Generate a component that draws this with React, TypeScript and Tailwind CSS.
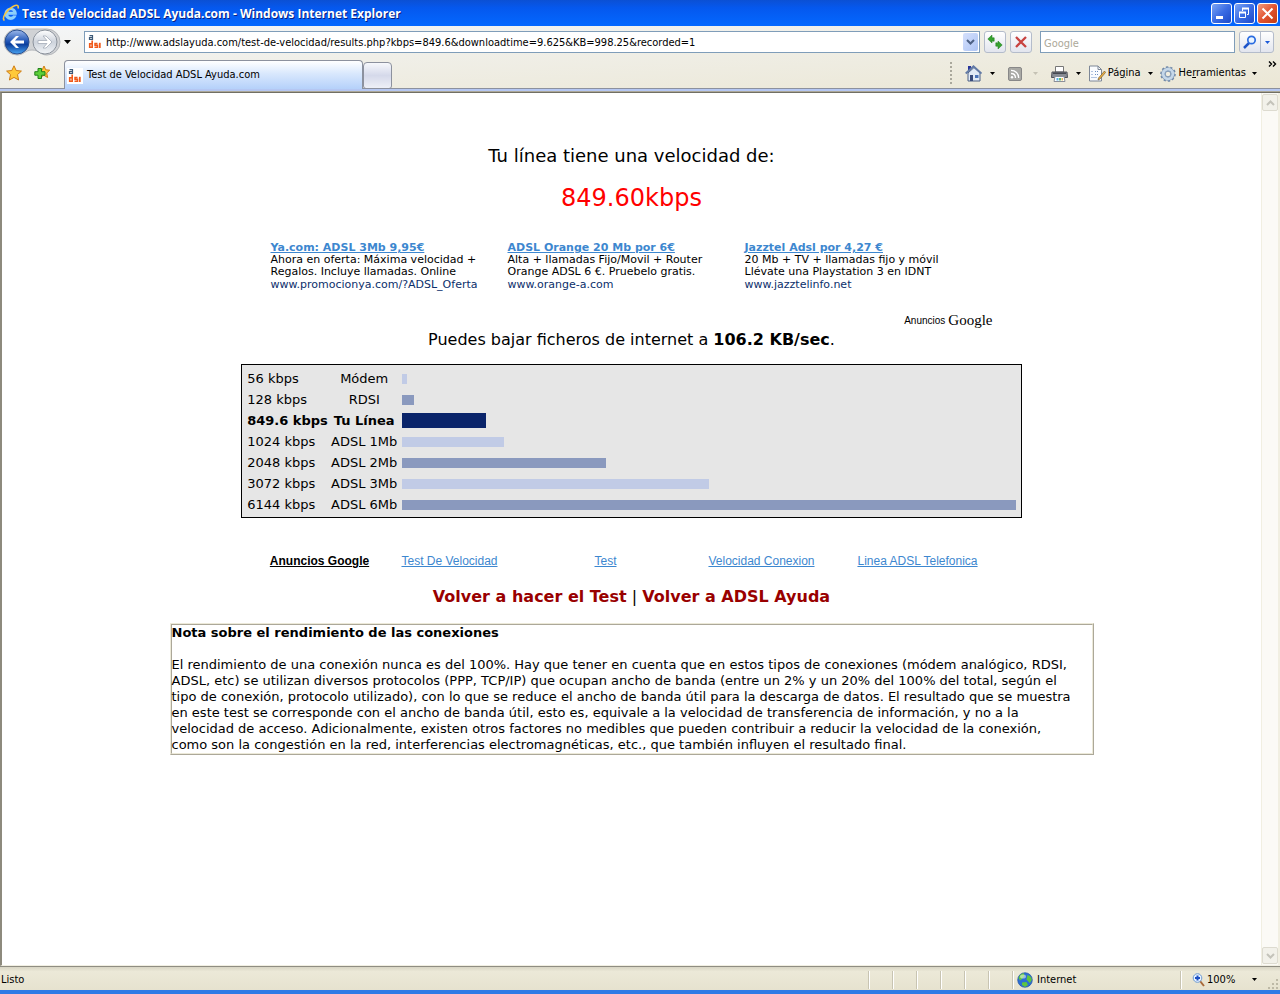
import type { ReactNode } from "react";

const tahoma = "font-['DejaVu_Sans_Condensed','DejaVu_Sans',sans-serif] text-[11px]";

const ads = [
  {
    title: "Ya.com: ADSL 3Mb 9,95€",
    lines: ["Ahora en oferta: Máxima velocidad +", "Regalos. Incluye llamadas. Online"],
    url: "www.promocionya.com/?ADSL_Oferta",
  },
  {
    title: "ADSL Orange 20 Mb por 6€",
    lines: ["Alta + llamadas Fijo/Movil + Router", "Orange ADSL 6 €. Pruebelo gratis."],
    url: "www.orange-a.com",
  },
  {
    title: "Jazztel Adsl por 4,27 €",
    lines: ["20 Mb + TV + llamadas fijo y móvil", "Llévate una Playstation 3 en IDNT"],
    url: "www.jazztelinfo.net",
  },
];

const speeds = [
  { kbps: 56, name: "Módem", bar: "h-[10px] bg-[#c1cbe6]" },
  { kbps: 128, name: "RDSI", bar: "h-[10px] bg-[#8a99be]" },
  { kbps: 849.6, name: "Tu Línea", bar: "h-[15px] bg-[#0a246a]", own: true },
  { kbps: 1024, name: "ADSL 1Mb", bar: "h-[10px] bg-[#c1cbe6]" },
  { kbps: 2048, name: "ADSL 2Mb", bar: "h-[10px] bg-[#8a99be]" },
  { kbps: 3072, name: "ADSL 3Mb", bar: "h-[10px] bg-[#c1cbe6]" },
  { kbps: 6144, name: "ADSL 6Mb", bar: "h-[10px] bg-[#8a99be]" },
];

const topics = ["Test De Velocidad", "Test", "Velocidad Conexion", "Linea ADSL Telefonica"];

function Caret({ color = "#000" }: { color?: string }) {
  return (
    <svg width="5" height="3" viewBox="0 0 5 3" className="shrink-0">
      <path d="M0 0h5L2.5 3z" fill={color} />
    </svg>
  );
}

function IeLogo() {
  return (
    <svg width="18" height="18" viewBox="0 0 18 18" className="shrink-0">
      <path d="M14.500 10.500H6c.3 2.800 3.800 3.100 5 1.200h3.200C12 17.800 2.800 16.600 2.800 9.800 2.800 2.200 15.200 1.600 14.500 10.500zM6 8h5.300c-.4-2.600-4.700-2.600-5.300 0z" fill="#8ad0fb" stroke="#bfe6ff" strokeWidth=".4" />
      <path d="M2.500 16.500C-.5 14.500 4 6 11 2.500c4-2 6-1.500 5 2" fill="none" stroke="#f5c542" strokeWidth="1.600" />
    </svg>
  );
}

function Favicon() {
  return (
    <svg width="16" height="16" viewBox="0 0 16 16" className="shrink-0">
      <rect width="16" height="16" fill="#fff" />
      <path d="M2.500 1.600h3V5.400h-3V3.500h3" fill="none" stroke="#3d5a78" strokeWidth="1.200" />
      <path d="M5.200 6.500v6.700H2.700V9.700h2.500" fill="none" stroke="#f0591a" strokeWidth="1.600" />
      <path d="M10.500 9.500H8v1.800h2.500v2H7.500" fill="none" stroke="#f0591a" strokeWidth="1.500" />
      <path d="M12.800 8.800V14" stroke="#f0591a" strokeWidth="1.800" />
    </svg>
  );
}

function NavButtons() {
  return (
    <svg width="58" height="28" viewBox="0 0 58 28">
      <defs>
        <linearGradient id="back" x1="0" y1="0" x2="0" y2="1">
          <stop offset="0" stopColor="#9db9ea" />
          <stop offset=".45" stopColor="#2559b8" />
          <stop offset=".6" stopColor="#0c3f9e" />
          <stop offset="1" stopColor="#48a4f2" />
        </linearGradient>
        <linearGradient id="fwd" x1="0" y1="0" x2="0" y2="1">
          <stop offset="0" stopColor="#fff" />
          <stop offset=".5" stopColor="#cdd3dc" />
          <stop offset="1" stopColor="#f2f5f8" />
        </linearGradient>
      </defs>
      <path d="M14 1h30a13 13 0 0 1 0 26c-7 0-8-5-15-5s-8 5-15 5A13 13 0 0 1 14 1z" fill="#d0d2d5" stroke="#b4b7bb" />
      <circle cx="14" cy="14" r="12" fill="url(#back)" stroke="#2b4f8f" />
      <circle cx="42" cy="14" r="12" fill="url(#fwd)" stroke="#8b929c" />
      <path d="M7 14l6-6h3l-4 4.500h9v3h-9l4 4.500h-3z" fill="#fff" />
      <path d="M49 14l-6-6h-3l4 4.500h-9v3h9l-4 4.500h3z" fill="#fff" stroke="#a3abb7" strokeWidth=".8" />
    </svg>
  );
}

function Star({ plus = false }: { plus?: boolean }) {
  return (
    <svg width="16" height="16" viewBox="0 0 16 16">
      <path d={plus ? "M10 1l1.700 3.800 4 .4-3 2.800.9 4.500L10 10.300 6 12.500 7 8 4.500 5.200l3.700-.4z" : "M8 .8l2.200 4.700 5.200.6-3.900 3.500 1.100 5.400L8 12.400 3.400 15l1.100-5.400L.6 6.100l5.200-.6z"} fill="#ffc93a" stroke="#cf7c13" />
      {plus && <path d="M4 3.500h3.500v3.200H11v3.500H7.500v3.300H4v-3.300H.8V6.700H4z" fill="#5ed039" stroke="#21801b" />}
    </svg>
  );
}

function HomeIcon() {
  return (
    <svg width="17" height="17" viewBox="0 0 17 17">
      <path d="M3 1h3v4H3z" fill="#27349b" />
      <path d="M3 8l6-5.500L15 8v8H3z" fill="#e1eaf6" stroke="#4c6085" />
      <path d="M.7 8.500L8.500 1.300l8 7.200" fill="none" stroke="#627aa6" strokeWidth="1.800" />
      <path d="M5 10h3v6H5z" fill="#394b7a" />
      <path d="M10 10h3.500v3H10z" fill="#4b74b8" />
    </svg>
  );
}

function RssIcon() {
  return (
    <svg width="14" height="14" viewBox="0 0 14 14">
      <rect x=".5" y=".5" width="13" height="13" rx="1.500" fill="#a9a9a5" stroke="#888" />
      <circle cx="4" cy="10.300" r="1.200" fill="#fff" />
      <path d="M3 6.500c2.700 0 4.500 1.800 4.500 4.500M3 3.300c4.500 0 7.700 3.200 7.700 7.700" fill="none" stroke="#fff" strokeWidth="1.300" />
    </svg>
  );
}

function PrinterIcon() {
  return (
    <svg width="17" height="16" viewBox="0 0 17 16">
      <path d="M4.500.5h8V6h-8z" fill="#fff" stroke="#777" />
      <path d="M1 6h15l.5 5.500H.5z" fill="#888c93" stroke="#50545b" />
      <path d="M2 6.500h13v1.500H2z" fill="#454950" />
      <path d="M4 10.500h9l1 5H3z" fill="#fff" stroke="#8b9099" />
      <path d="M5.500 12h2v2.500h-2z" fill="#58aee8" />
      <path d="M8 12h2v2.500H8z" fill="#61bd71" />
      <path d="M10.500 12h1.500v2.500h-1.500z" fill="#e8b658" />
    </svg>
  );
}

function PageIcon() {
  return (
    <svg width="17" height="17" viewBox="0 0 17 17">
      <path d="M.5 1h8.500l3.500 3.500V16H.5z" fill="#fafcff" stroke="#7d8797" />
      <path d="M9 1v3.500h3.500" fill="none" stroke="#7d8797" />
      <path d="M2.500 6.500h2M6 6.500h4M2.500 9.500h2M6 9.500h3M2.500 12.500h5" stroke="#6d8fc2" strokeDasharray="1 1" />
      <path d="M15.500 6L9.500 13l-.5 2 2-1 5.500-6.500z" fill="#eeb044" stroke="#765d31" strokeWidth=".7" />
    </svg>
  );
}

function GearIcon() {
  return (
    <svg width="16" height="16" viewBox="0 0 16 16">
      <circle cx="8" cy="8" r="6.700" fill="none" stroke="#6f87a6" strokeWidth="2.200" strokeDasharray="2.200 2" />
      <circle cx="8" cy="8" r="4.800" fill="none" stroke="#7d96b5" strokeWidth="4" />
      <circle cx="8" cy="8" r="4.800" fill="none" stroke="#c5d7e9" strokeWidth="2.800" />
      <circle cx="8" cy="8" r="2.800" fill="#f0ede0" stroke="#7d96b5" />
    </svg>
  );
}

function GlobeIcon() {
  return (
    <svg width="16" height="16" viewBox="0 0 16 16" className="shrink-0">
      <circle cx="8" cy="8" r="7.300" fill="#2b6ed6" stroke="#2454a0" strokeWidth=".7" />
      <path d="M1.500 6c1-3 3-4.700 5.500-4.700L7.500 4 5 7 3 8.500zM10.500 3c2.500.5 4.300 2.500 4.300 5l-2 3-3.300-3.500zM5 10.500l4.500-.5 1.500 3L8 15l-3-2z" fill="#5fc540" />
      <ellipse cx="6" cy="4.500" rx="3" ry="2" fill="#fff" opacity=".5" />
    </svg>
  );
}

function Magnifier() {
  return (
    <svg width="13" height="14" viewBox="0 0 13 14" className="shrink-0">
      <path d="M8 8l4 5" stroke="#a8693a" strokeWidth="2" />
      <circle cx="5.500" cy="5" r="4.300" fill="#e7f2ff" stroke="#6e9bd2" />
      <path d="M5.500 2.500v5M3 5h5" stroke="#1d50c4" strokeWidth="2" />
    </svg>
  );
}

function TitleButton({ label, close = false, children }: { label: string; close?: boolean; children: ReactNode }) {
  return (
    <button
      aria-label={label}
      className={`flex size-[21px] items-center justify-center rounded-[3px] border border-white ${
        close ? "bg-linear-to-br from-[#f0997c] via-[#e25330] to-[#c33c12]" : "bg-linear-to-br from-[#7da4f4] via-[#3a6ce4] to-[#1d49c8]"
      }`}
    >
      <svg width="19" height="19" viewBox="0 0 19 19" fill="none" stroke="#fff" strokeWidth="2">
        {children}
      </svg>
    </button>
  );
}

function TitleBar() {
  return (
    <header className="flex h-[26px] items-center gap-[2px] bg-linear-to-b from-[#0b50d4] via-[#0558ee] via-30% to-[#0468ff] pr-[2px] pl-[2px]">
      <IeLogo />
      <h1 className="flex-1 pt-px font-['Open_Sans','Noto_Sans',sans-serif] text-[12px] font-bold text-white [text-shadow:1px_1px_#0a1f80]">
        Test de Velocidad ADSL Ayuda.com - Windows Internet Explorer
      </h1>
      <div className="flex gap-[2px]">
        <TitleButton label="Minimizar">
          <path d="M4 13.500h7" strokeWidth="3" />
        </TitleButton>
        <TitleButton label="Restaurar">
          <path d="M7.500 7V4.500h6v6H12M4.500 8.500h6v5h-6z" strokeWidth="1" />
          <path d="M7 4.500h7M4 8.500h7" strokeWidth="2" />
        </TitleButton>
        <TitleButton label="Cerrar" close>
          <path d="M4.500 4.500l10 10M14.500 4.500l-10 10" />
        </TitleButton>
      </div>
    </header>
  );
}

const squareButton = "flex h-[22px] w-[22px] items-center justify-center rounded-[3px] border border-[#b4bccb] bg-linear-to-b from-white to-[#e2e5ee]";

function AddressRow() {
  return (
    <div className="flex h-8 items-center pr-[6px] pl-[3px]">
      <div className="flex w-[81px] items-center gap-[3px]">
        <button aria-label="Atrás y adelante">
          <NavButtons />
        </button>
        <button aria-label="Páginas recientes" className="py-2">
          <svg width="7" height="4" viewBox="0 0 7 4"><path d="M0 0h7L3.500 4z" /></svg>
        </button>
      </div>
      <div className="flex h-[22px] flex-1 items-center border border-[#7f9db9] bg-white pr-px pl-[2px]">
        <Favicon />
        <input
          aria-label="Dirección"
          className="ml-[3px] min-w-0 flex-1 pt-[2px] outline-none"
          defaultValue="http://www.adslayuda.com/test-de-velocidad/results.php?kbps=849.6&downloadtime=9.625&KB=998.25&recorded=1"
        />
        <button aria-label="Mostrar direcciones" className="flex h-[18px] w-[15px] items-center justify-center rounded-[2px] bg-linear-to-br from-[#d5e0fc] to-[#adc4f4]">
          <svg width="9" height="6" viewBox="0 0 9 6"><path d="M1 1l3.500 3.500L8 1" fill="none" stroke="#4d6185" strokeWidth="2" /></svg>
        </button>
      </div>
      <div className="ml-1 flex gap-1">
        <button aria-label="Actualizar" className={squareButton}>
          <svg width="16" height="14" viewBox="0 0 16 14" className="shrink-0">
            <path d="M.8 4L5 0v2.800h2.200v3.400H5.500V5.200H5v2.800zM15.200 10L11 14v-2.800H8.800V7.800h1.700v1h.5V6z" fill="#36a32f" stroke="#1c7a1b" strokeWidth=".5" />
          </svg>
        </button>
        <button aria-label="Detener" className={squareButton}>
          <svg width="14" height="14" viewBox="0 0 14 14">
            <path d="M2 2l10 10M12 2L2 12" stroke="#c84340" strokeWidth="2.300" />
          </svg>
        </button>
      </div>
      <input aria-label="Buscar" placeholder="Google" className="ml-2 h-[22px] w-[195px] border border-[#7f9db9] bg-white px-[3px] pt-[2px] outline-none placeholder:text-[#aca899]" />
      <div className="ml-1 flex h-[22px] rounded-[3px] border border-[#b4bccb] bg-linear-to-b from-white to-[#e2e5ee]">
        <button aria-label="Iniciar búsqueda" className="flex w-5 items-center justify-center">
          <svg width="14" height="14" viewBox="0 0 14 14">
            <path d="M6 8l-5 5" stroke="#1f55c8" strokeWidth="2.500" />
            <circle cx="8.500" cy="5" r="3.700" fill="#eaf4ff" stroke="#2b6ce0" strokeWidth="1.700" />
          </svg>
        </button>
        <button aria-label="Opciones de búsqueda" className="flex w-[13px] items-center justify-center border-l border-[#b4bccb]">
          <Caret color="#1c5ad8" />
        </button>
      </div>
    </div>
  );
}

function TabRow() {
  return (
    <div className="flex h-[31px] items-end border-b border-[#8c919e]">
      <div className="flex h-[31px] w-16 items-center gap-3 pl-[6px]">
        <button aria-label="Centro de favoritos"><Star /></button>
        <button aria-label="Agregar a favoritos"><Star plus /></button>
      </div>
      <button className="-mb-px flex h-[29px] w-[299px] items-center gap-1 rounded-t-[4px] border border-b-0 border-[#8c919e] bg-linear-to-b from-white via-[#d9e8fd] via-45% to-[#b5d1fa] pt-px pl-[2px]">
        <Favicon />
        Test de Velocidad ADSL Ayuda.com
      </button>
      <button aria-label="Nueva ficha" className="-mb-px h-[27px] w-[29px] rounded-t-[4px] rounded-b-[3px] border border-[#8c919e] bg-linear-to-b from-[#f7f8fc] via-[#d5d9ea] via-50% to-[#eef0f7]" />
      <div className="ml-auto flex h-[31px] items-center pr-[3px]">
        <div className="h-[22px] w-[2px] bg-[repeating-linear-gradient(#aaa89c_0_2px,transparent_2px_4px)]" />
        <div className="flex items-center pt-[2px]">
          <button aria-label="Página principal" className="ml-[13px] flex items-center gap-2"><HomeIcon /><Caret /></button>
          <button aria-label="Fuentes" className="ml-[13px] flex items-center gap-[11px]"><RssIcon /><Caret color="#c5c2b4" /></button>
          <button aria-label="Imprimir" className="ml-[13px] flex items-center gap-2"><PrinterIcon /><Caret /></button>
          <button className="ml-2 flex items-center gap-[7px]">
            <span className="flex items-center gap-[2px]"><PageIcon /><span>Pá<u>g</u>ina</span></span>
            <Caret />
          </button>
          <button className="ml-[7px] flex items-center gap-[6px]">
            <span className="flex items-center gap-[3px]"><GearIcon /><span>He<u>r</u>ramientas</span></span>
            <Caret />
          </button>
        </div>
        <button aria-label="Más herramientas" className="ml-[11px] self-start pt-1">
          <svg width="9" height="6" viewBox="0 0 9 6"><path d="M1 .5L3.500 3 1 5.500M5 .5L7.500 3 5 5.500" fill="none" stroke="#000" strokeWidth="1.400" /></svg>
        </button>
      </div>
    </div>
  );
}

function ScrollButton({ label, d }: { label: string; d: string }) {
  return (
    <button aria-label={label} className="flex h-[17px] w-4 items-center justify-center rounded-[2px] border border-[#dddbd0] bg-[#f2f1ea]">
      <svg width="9" height="6" viewBox="0 0 9 6"><path d={d} fill="none" stroke="#c4c3ba" strokeWidth="2" /></svg>
    </button>
  );
}

function SpeedChart() {
  return (
    <div className="w-[62%] border border-black bg-[#e6e6e6] pt-[3px] pb-[2px] pl-[5px] text-[13px]">
      <table className="w-full border-collapse">
        <tbody>
          {speeds.map((speed) => (
            <tr key={speed.name} className={`h-[21px] leading-5 ${speed.own ? "font-bold" : ""}`}>
              <td className="w-[82px] p-0 whitespace-nowrap">{speed.kbps} kbps</td>
              <td className="w-[70px] p-0 text-center whitespace-nowrap">{speed.name}</td>
              <td className="p-0 pl-[3px]">
                <div className={speed.bar} style={{ width: Math.floor(speed.kbps / 10) }} />
              </td>
            </tr>
          ))}
        </tbody>
      </table>
    </div>
  );
}

function Results() {
  return (
    <main className="flex flex-1 flex-col items-center bg-white font-['Verdana','DejaVu_Sans',sans-serif] text-black">
      <h2 className="pt-[51px] text-[18px] leading-6">Tu línea tiene una velocidad de:</h2>
      <p className="mt-[14px] text-[24px] leading-8 text-[#ff0000]">849.60kbps</p>

      <div className="mt-[27px] w-[728px] max-w-full">
        <div className="flex pl-[3px]">
          {ads.map((ad) => (
            <div key={ad.title} className="w-[237px] text-[11px] leading-3 whitespace-nowrap">
              <a href="#" className="block leading-[13px] font-bold text-[#3d87cf] underline">{ad.title}</a>
              {ad.lines.map((line) => <p key={line}>{line}</p>)}
              <p className="leading-[14px] text-[#0b2f6b]">{ad.url}</p>
            </div>
          ))}
        </div>
        <p className="mt-[18px] flex h-5 items-center justify-end gap-[3px] pr-[3px] font-['Liberation_Sans',sans-serif] text-[10px]">
          Anuncios
          <span className="font-['Liberation_Serif',serif] text-[15px] leading-5">Google</span>
        </p>
      </div>

      <p className="mt-[-2px] text-[16px] leading-6">
        Puedes bajar ficheros de internet a <b>106.2 KB/sec</b>.
      </p>

      <div className="mt-3 flex w-full justify-center">
        <SpeedChart />
      </div>

      <nav className="mt-[35px] flex w-[728px] max-w-full text-center font-['Liberation_Sans',sans-serif] text-[12px] leading-4">
        <a href="#" className="w-[104px] font-bold underline">Anuncios Google</a>
        {topics.map((topic) => (
          <a key={topic} href="#" className="flex-1 text-[#3d87cf] underline">{topic}</a>
        ))}
      </nav>

      <p className="mt-4 text-[16px] leading-6">
        <a href="#" className="font-bold text-[#990000]">Volver a hacer el Test</a> |{" "}
        <a href="#" className="font-bold text-[#990000]">Volver a ADSL Ayuda</a>
      </p>

      <section className="mt-[14px] w-[924px] max-w-full border border-t-[#ece9d8] border-r-[#aca899] border-b-[#aca899] border-l-[#ece9d8] text-[13px] leading-4">
        <div className="border border-t-[#aca899] border-r-[#ece9d8] border-b-[#ece9d8] border-l-[#aca899]">
          <h3 className="font-bold">Nota sobre el rendimiento de las conexiones</h3>
          <p className="mt-4 pr-3">
            El rendimiento de una conexión nunca es del 100%. Hay que tener en cuenta que en estos tipos de conexiones (módem analógico, RDSI, ADSL, etc) se utilizan diversos protocolos (PPP, TCP/IP) que ocupan ancho de banda (entre un 2% y un 20% del 100% del total, según el tipo de conexión, protocolo utilizado), con lo que se reduce el ancho de banda útil para la descarga de datos. El resultado que se muestra en este test se corresponde con el ancho de banda útil, esto es, equivale a la velocidad de transferencia de información, y no a la velocidad de acceso. Adicionalmente, existen otros factores no medibles que pueden contribuir a reducir la velocidad de la conexión, como son la congestión en la red, interferencias electromagnéticas, etc., que también influyen el resultado final.
          </p>
        </div>
      </section>
    </main>
  );
}

const statusPane = "h-[18px] w-6 border-r border-[#c8c4b2] shadow-[1px_0_#fff]";

function StatusBar() {
  return (
    <footer className="flex h-[23px] items-center bg-linear-to-b from-[#d8d5c4] via-[#ece9d8] via-20% to-[#e6e2cf] pt-[2px]">
      <span className="flex-1 pt-px pl-px">Listo</span>
      <div className={statusPane} />
      <div className={statusPane} />
      <div className={statusPane} />
      <div className={statusPane} />
      <div className={statusPane} />
      <div className={statusPane} />
      <div className={statusPane} />
      <div className="flex h-[18px] w-[168px] items-center gap-1 border-r border-[#c8c4b2] pl-[4px] shadow-[1px_0_#fff]">
        <GlobeIcon />
        <span className="pt-px">Internet</span>
      </div>
      <button className="flex w-[76px] items-center gap-[2px] pl-[11px]">
        <Magnifier />
        <span className="flex-1 pt-px text-left">100%</span>
        <Caret />
      </button>
      <svg width="12" height="12" viewBox="0 0 12 12" className="mr-px ml-[10px] self-end">
        <path d="M9 1h2v2H9zM5 5h2v2H5zM9 5h2v2H9zM1 9h2v2H1zM5 9h2v2H5zM9 9h2v2H9z" fill="#bdb9a6" />
      </svg>
    </footer>
  );
}

export default function App() {
  return (
    <div className={`flex min-h-screen flex-col bg-[#ece9d8] text-black ${tahoma}`}>
      <TitleBar />
      <div className="bg-linear-to-br from-[#f4f6f8] via-[#f0efe8] via-40% to-[#ebe7d5]">
        <AddressRow />
        <TabRow />
      </div>
      <div className="h-[3px] border-b border-[#aca899] bg-[#b5c7f2]" />
      <div className="flex flex-1 border-t border-b border-l-2 border-t-[#716f64] border-b-[#f1efe2] border-l-[#8d8a7d]">
        <Results />
        <div className="flex w-[17px] flex-col justify-between border-l border-[#f1efe2] bg-[#fbfaf6] py-px">
          <ScrollButton label="Subir" d="M1 5l3.500-3.500L8 5" />
          <ScrollButton label="Bajar" d="M1 1l3.500 3.500L8 1" />
        </div>
        <div className="w-[2px] bg-[#f1efe2]" />
      </div>
      <div className="h-px bg-[#8f8d82]" />
      <StatusBar />
      <div className="h-1 bg-[#2f7ae5]" />
    </div>
  );
}
